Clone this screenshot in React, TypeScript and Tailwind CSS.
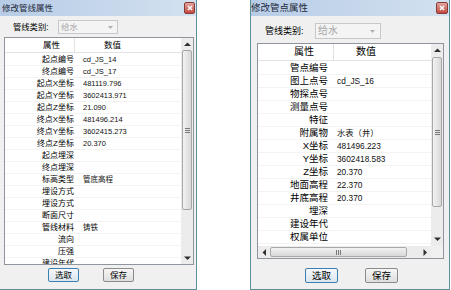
import React from 'react';

type Row = [string, string];

const lineRows: Row[] = [
  ['起点编号', 'cd_JS_14'],
  ['终点编号', 'cd_JS_17'],
  ['起点X坐标', '481119.796'],
  ['起点Y坐标', '3602413.971'],
  ['起点Z坐标', '21.090'],
  ['终点X坐标', '481496.214'],
  ['终点Y坐标', '3602415.273'],
  ['终点Z坐标', '20.370'],
  ['起点埋深', ''],
  ['终点埋深', ''],
  ['标高类型', '管底高程'],
  ['埋设方式', ''],
  ['埋设方式', ''],
  ['断面尺寸', ''],
  ['管线材料', '铸铁'],
  ['流向', ''],
  ['压强', ''],
  ['建设年代', ''],
];

const pointRows: Row[] = [
  ['管点编号', ''],
  ['图上点号', 'cd_JS_16'],
  ['物探点号', ''],
  ['测量点号', ''],
  ['特征', ''],
  ['附属物', '水表（井）'],
  ['X坐标', '481496.223'],
  ['Y坐标', '3602418.583'],
  ['Z坐标', '20.370'],
  ['地面高程', '22.370'],
  ['井底高程', '20.370'],
  ['埋深', ''],
  ['建设年代', ''],
  ['权属单位', ''],
];

const font = { fontFamily: '"Liberation Sans", "Noto Sans CJK SC", sans-serif' };

const CloseBtn = ({ cls }: { cls: string }) => (
  <div className={`${cls} flex items-center justify-center rounded-[2px] border border-[#8a3b36] bg-gradient-to-b from-[#e1a59f] to-[#c2463e]`}>
    <svg width="6" height="6" viewBox="0 0 6 6">
      <path d="M1 1L5 5M5 1L1 5" stroke="#fff" strokeWidth="1.4" />
    </svg>
  </div>
);

const Arrow = ({ dir }: { dir: 'up' | 'down' | 'left' | 'right' }) => {
  const d = {
    up: 'M0 4L3.5 0.5L7 4Z',
    down: 'M0 0.5L3.5 4L7 0.5Z',
    left: 'M4 0L0.5 3.5L4 7Z',
    right: 'M0.5 0L4 3.5L0.5 7Z',
  }[dir];
  const vertical = dir === 'up' || dir === 'down';
  return (
    <svg width={vertical ? 7 : 5} height={vertical ? 5 : 7} viewBox={vertical ? '0 0 7 5' : '0 0 5 7'}>
      <path d={d} fill="#303030" />
    </svg>
  );
};

const Grip = ({ vertical }: { vertical: boolean }) =>
  vertical ? (
    <div className="flex flex-col gap-[1px]">
      <div className="h-[1px] w-[5px] bg-[#777]" />
      <div className="h-[1px] w-[5px] bg-[#777]" />
      <div className="h-[1px] w-[5px] bg-[#777]" />
    </div>
  ) : (
    <div className="flex gap-[1px]">
      <div className="h-[5px] w-[1px] bg-[#777]" />
      <div className="h-[5px] w-[1px] bg-[#777]" />
      <div className="h-[5px] w-[1px] bg-[#777]" />
    </div>
  );

const LineDialog = () => (
  <div className="flex h-[290px] w-[197px] shrink-0 flex-col border-r border-b border-[#5a8f9c] bg-[#f0f0f0]" style={font}>
    <div className="flex h-[16px] items-center justify-between bg-gradient-to-r from-[#b7cce6] to-[#d3e1f0] pr-[1px] pl-[2px]">
      <span className="text-[8.5px] leading-none text-[#1e2a3a]">修改管线属性</span>
      <CloseBtn cls="h-[12px] w-[11px]" />
    </div>
    <div className="mt-[4px] flex h-[14px] items-center">
      <span className="ml-[13px] w-[45px] text-[8.3px] leading-none text-black">管线类别:</span>
      <div className="flex h-[14px] w-[60px] items-center justify-between border border-[#c8c8c8] bg-[#f4f4f4] pr-[4px] pl-[2px]">
        <span className="text-[8.5px] leading-none text-[#a6a6a6]">给水</span>
        <svg width="5" height="3" viewBox="0 0 5 3"><path d="M0 0L2.5 3L5 0Z" fill="#b0b0b0" /></svg>
      </div>
    </div>
    <div className="mt-[3px] ml-[4px] flex h-[228px] w-[190px] border border-[#8e959c] bg-white">
      <div className="flex-1 overflow-hidden">
        <div className="flex h-[15px] items-center border-b border-[#e2e2e2] text-[8.5px] leading-none text-black">
          <div className="flex h-full w-[70px] items-center border-r border-[#e2e2e2] pl-[38px]">属性</div>
          <div className="pl-[29px]">数值</div>
        </div>
        <div className="pt-[1px]">
          {lineRows.map(([k, v], i) => (
            <div key={i} className="flex h-[12px] items-center border-b border-[#f3f3f3]">
              <div className="w-[69px] text-right text-[8px] leading-none text-black">{k}</div>
              <div className="pl-[9px] text-[7.5px] leading-none text-[#111]">{v}</div>
            </div>
          ))}
        </div>
      </div>
      <div className="flex w-[12px] flex-col bg-[#ececec]">
        <div className="flex h-[12px] items-center justify-center"><Arrow dir="up" /></div>
        <div className="mx-[1px] flex h-[160px] items-center justify-center rounded-[2px] border border-[#a8a8a8] bg-gradient-to-r from-[#f2f2f2] to-[#d8d8d8]">
          <Grip vertical />
        </div>
        <div className="flex-1" />
        <div className="flex h-[12px] items-center justify-center"><Arrow dir="down" /></div>
      </div>
    </div>
    <div className="mt-[3px] flex">
      <button className="ml-[48px] flex h-[14px] w-[31px] items-center justify-center rounded-[2px] border border-[#3c7fb1] bg-gradient-to-b from-[#f4f8fb] to-[#dce6ee] text-[8.5px] leading-none text-black">选取</button>
      <button className="ml-[24px] flex h-[14px] w-[31px] items-center justify-center rounded-[2px] border border-[#8b8b8b] bg-gradient-to-b from-[#f6f6f6] to-[#dedede] text-[8.5px] leading-none text-black">保存</button>
    </div>
  </div>
);

const PointDialog = () => (
  <div className="ml-[53px] flex h-[290px] w-[200px] shrink-0 flex-col border-x border-b border-[#5a8f9c] bg-[#f0f0f0]" style={font}>
    <div className="flex h-[16px] items-center justify-between bg-gradient-to-r from-[#b7cce6] to-[#d3e1f0] pr-[1px] pl-[0px]">
      <span className="text-[9.5px] leading-none text-[#1e2a3a]">修改管点属性</span>
      <CloseBtn cls="h-[12px] w-[12px]" />
    </div>
    <div className="mt-[7px] flex h-[16px] items-center">
      <span className="ml-[14px] w-[50px] text-[9px] leading-none text-black">管线类别:</span>
      <div className="flex h-[16px] w-[66px] items-center justify-between border border-[#c8c8c8] bg-[#f4f4f4] pr-[5px] pl-[2px]">
        <span className="text-[10px] leading-none text-[#a6a6a6]">给水</span>
        <svg width="5" height="3" viewBox="0 0 5 3"><path d="M0 0L2.5 3L5 0Z" fill="#b0b0b0" /></svg>
      </div>
    </div>
    <div className="mt-[4px] ml-[6px] flex h-[216px] w-[187px] flex-col border border-[#8e959c] bg-white">
      <div className="flex min-h-0 flex-1">
        <div className="flex-1 overflow-hidden">
          <div className="flex h-[17px] items-center border-b border-[#e2e2e2] text-[10px] leading-none text-black">
            <div className="flex h-full w-[76px] items-center border-r border-[#e2e2e2] pl-[36px]">属性</div>
            <div className="pl-[22px]">数值</div>
          </div>
          <div className="pt-[1px]">
            {pointRows.map(([k, v], i) => (
              <div key={i} className="flex h-[13px] items-center border-b border-[#f3f3f3]">
                <div className="w-[70px] text-right text-[9.5px] leading-none text-black">{k}</div>
                <div className="pl-[9px] text-[8.3px] leading-none text-[#111]">{v}</div>
              </div>
            ))}
          </div>
        </div>
        <div className="flex w-[12px] flex-col bg-[#ececec]">
          <div className="flex h-[13px] items-center justify-center"><Arrow dir="up" /></div>
          <div className="mx-[1px] flex h-[150px] items-center justify-center rounded-[2px] border border-[#a8a8a8] bg-gradient-to-r from-[#f2f2f2] to-[#d8d8d8]">
            <Grip vertical />
          </div>
          <div className="flex-1" />
          <div className="flex h-[13px] items-center justify-center"><Arrow dir="down" /></div>
        </div>
      </div>
      <div className="flex h-[12px] bg-[#ececec]">
        <div className="flex w-[12px] items-center justify-center"><Arrow dir="left" /></div>
        <div className="my-[1px] flex w-[137px] items-center justify-center rounded-[2px] border border-[#a8a8a8] bg-gradient-to-b from-[#f2f2f2] to-[#d8d8d8]">
          <Grip vertical={false} />
        </div>
        <div className="flex-1" />
        <div className="flex w-[12px] items-center justify-center"><Arrow dir="right" /></div>
        <div className="w-[12px] bg-[#f0f0f0]" />
      </div>
    </div>
    <div className="mt-[9px] flex">
      <button className="ml-[54px] flex h-[15px] w-[33px] items-center justify-center rounded-[2px] border border-[#3c7fb1] bg-gradient-to-b from-[#f4f8fb] to-[#dce6ee] text-[9.5px] leading-none text-black">选取</button>
      <button className="ml-[27px] flex h-[15px] w-[33px] items-center justify-center rounded-[2px] border border-[#8b8b8b] bg-gradient-to-b from-[#f6f6f6] to-[#dedede] text-[9.5px] leading-none text-black">保存</button>
    </div>
  </div>
);

export default function App() {
  return (
    <div className="flex h-[290px] w-[451px] bg-white">
      <LineDialog />
      <PointDialog />
    </div>
  );
}
